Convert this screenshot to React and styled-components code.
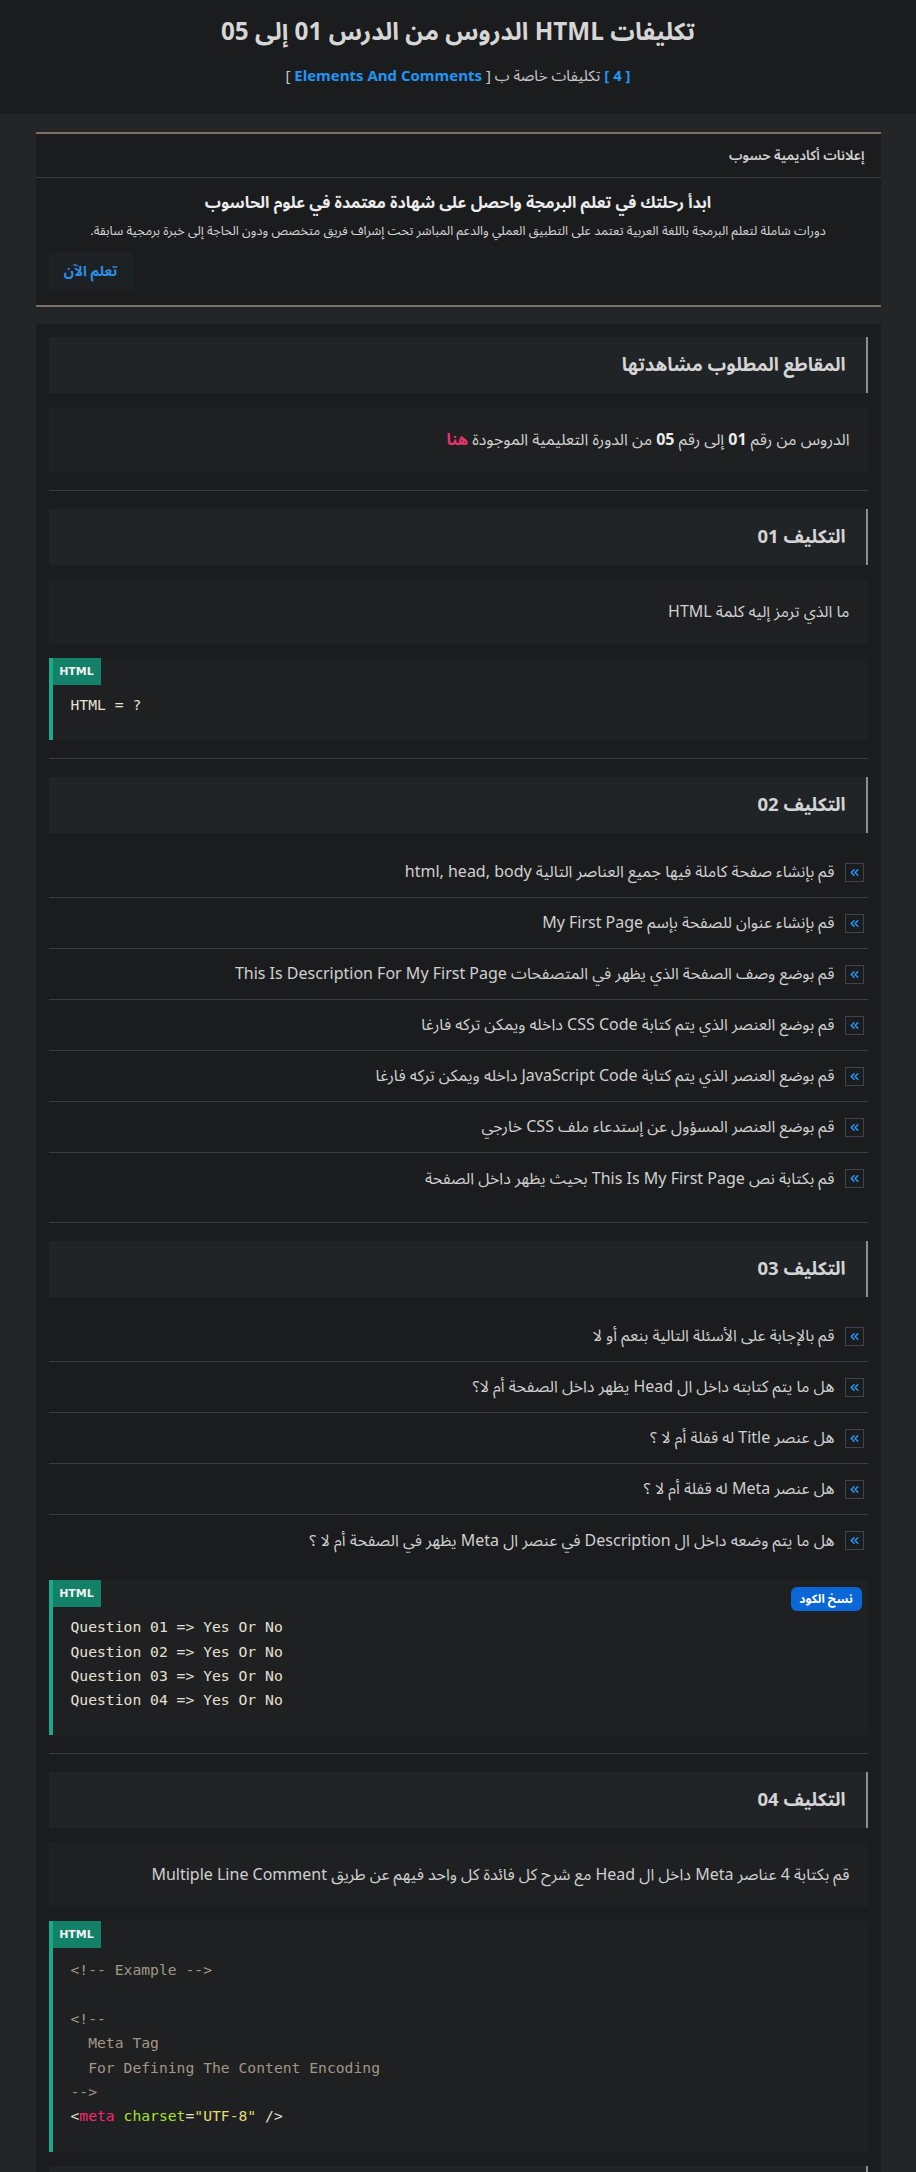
import React from 'react';
import styled, { createGlobalStyle } from 'styled-components';

const GlobalStyle = createGlobalStyle`
  body {
    margin: 0;
    background: #242527;
    direction: rtl;
    font-family: "Noto Sans Arabic", "Noto Kufi Arabic", "Noto Sans", "DejaVu Sans", sans-serif;
    color: #cfcfcf;
  }
`;

const Header = styled.header`
  background: #1b1c1e;
  height: 114px;
  box-sizing: border-box;
  padding-top: 12px;
  text-align: center;
`;

const Title = styled.h1`
  margin: 0;
  font-size: 24.3px;
  line-height: 42px;
  font-weight: 700;
  color: #d6d6d6;
`;

const Subtitle = styled.p`
  margin: 2px 0 0;
  font-size: 15px;
  line-height: 40px;
  color: #c8c8c8;
`;

const Blue = styled.span`
  color: #2196f3;
  font-weight: ${p => (p.bold ? 700 : 400)};
`;

const Container = styled.main`
  width: 845px;
  margin: 18px auto 0;
`;

const AdBox = styled.section`
  background: #1b1c1e;
  border-top: 2px solid #7a7066;
  border-bottom: 2px solid #7a7066;
`;

const AdHead = styled.div`
  height: 43px;
  display: flex;
  align-items: center;
  padding: 0 16px;
  border-bottom: 1px solid #3a3b3d;
  font-size: 13.5px;
  font-weight: 600;
  color: #d2d2d2;
`;

const AdBody = styled.div`
  padding: 12px 13px 14px;
  text-align: center;
`;

const AdTitle = styled.h3`
  margin: 0;
  font-size: 16px;
  line-height: 26px;
  font-weight: 700;
  color: #ececec;
`;

const AdText = styled.p`
  margin: 4px 0 10px;
  font-size: 12.7px;
  line-height: 22px;
  color: #d6d6d6;
`;

const AdButton = styled.a`
  display: block;
  width: 84px;
  height: 39px;
  line-height: 39px;
  background: #1e2124;
  border-radius: 4px;
  color: #2b8fe8;
  font-weight: 700;
  font-size: 14px;
  text-align: center;
  margin-right: auto;
  text-decoration: none;
`;

const Card = styled.section`
  background: #1b1c1e;
  margin-top: 17px;
  padding: 13px;
`;

const Section = styled.div`
  display: flex;
  flex-direction: column;
  gap: 14px;
`;

const Heading = styled.h2`
  margin: 0;
  height: 56px;
  box-sizing: border-box;
  display: flex;
  align-items: center;
  padding: 0 20px;
  background: #212426;
  border-right: 2px solid #8c8c8c;
  font-size: 18.5px;
  font-weight: 700;
  color: #d4d4d4;
`;

const Para = styled.p`
  margin: 0;
  height: 65px;
  display: flex;
  align-items: center;
  padding: 0 18px;
  background: #1e2022;
  font-size: 16px;
  color: #d0d0d0;
`;

const Strong = styled.b`
  color: ${p => p.color || '#ececec'};
  white-space: pre;
`;

const Divider = styled.hr`
  border: 0;
  height: 1px;
  background: #3a3b3d;
  margin: 18px 0;
`;

const List = styled.ul`
  list-style: none;
  margin: 0;
  padding: 0;
`;

const Item = styled.li`
  height: 51px;
  box-sizing: border-box;
  display: flex;
  align-items: center;
  gap: 10px;
  padding-right: 4px;
  font-size: 16px;
  color: #d0d0d0;
  border-bottom: 1px solid #3a3b3d;
  &:last-child {
    border-bottom: 0;
  }
`;

const IconBox = styled.span`
  width: 19px;
  height: 19px;
  box-sizing: border-box;
  border: 1px solid #3e444b;
  display: flex;
  align-items: center;
  justify-content: center;
  flex: none;
`;

const CodeBlock = styled.div`
  position: relative;
  direction: ltr;
  background: #1f2022;
  border-left: 4px solid #1aa98a;
`;

const Tag = styled.div`
  width: 48px;
  height: 27px;
  line-height: 27px;
  background: #138068;
  color: #f2f2f2;
  font-family: "DejaVu Sans", sans-serif;
  font-size: 11px;
  font-weight: 700;
  text-align: center;
`;

const Pre = styled.pre`
  margin: 0;
  padding: ${p => p.top || 8}px 18px 23px;
  font-family: "DejaVu Sans Mono", "Liberation Mono", monospace;
  font-size: 14.7px;
  line-height: 24.3px;
  color: #e6e0d2;
`;

const CopyButton = styled.button`
  position: absolute;
  top: 7px;
  right: 6px;
  height: 24px;
  width: 71px;
  border: 0;
  border-radius: 6px;
  background: #0b66d6;
  color: #fff;
  font-family: inherit;
  font-size: 12px;
  font-weight: 700;
  direction: rtl;
  padding: 0;
`;

const C = styled.span`
  color: ${p => p.c};
`;

const Chevrons = () => (
  <svg width="13" height="13" viewBox="0 0 24 24" fill="none" stroke="#2196f3" strokeWidth="3" strokeLinecap="round" strokeLinejoin="round">
    <path d="M11 17l-5-5 5-5" />
    <path d="M18 17l-5-5 5-5" />
  </svg>
);

const Tasks = ({ items }) => (
  <List>
    {items.map((t, i) => (
      <Item key={i}>
        <IconBox><Chevrons /></IconBox>
        <span>{t}</span>
      </Item>
    ))}
  </List>
);

const task2 = [
  'قم بإنشاء صفحة كاملة فيها جميع العناصر التالية html, head, body',
  'قم بإنشاء عنوان للصفحة بإسم My First Page',
  'قم بوضع وصف الصفحة الذي يظهر في المتصفحات This Is Description For My First Page',
  'قم بوضع العنصر الذي يتم كتابة CSS Code داخله ويمكن تركه فارغا',
  'قم بوضع العنصر الذي يتم كتابة JavaScript Code داخله ويمكن تركه فارغا',
  'قم بوضع العنصر المسؤول عن إستدعاء ملف CSS خارجي',
  'قم بكتابة نص This Is My First Page بحيث يظهر داخل الصفحة',
];

const task3 = [
  'قم بالإجابة على الأسئلة التالية بنعم أو لا',
  'هل ما يتم كتابته داخل ال Head يظهر داخل الصفحة أم لا؟',
  'هل عنصر Title له قفلة أم لا ؟',
  'هل عنصر Meta له قفلة أم لا ؟',
  'هل ما يتم وضعه داخل ال Description في عنصر ال Meta يظهر في الصفحة أم لا ؟',
];

const comment = '#a39784';

export default function App() {
  return (
    <>
      <GlobalStyle />
      <Header>
        <Title>تكليفات HTML الدروس من الدرس 01 إلى 05</Title>
        <Subtitle>
          <Blue bold>[ 4 ]</Blue> تكليفات خاصة ب [ <Blue bold>Elements And Comments</Blue> ]
        </Subtitle>
      </Header>

      <Container>
        <AdBox>
          <AdHead>إعلانات أكاديمية حسوب</AdHead>
          <AdBody>
            <AdTitle>ابدأ رحلتك في تعلم البرمجة واحصل على شهادة معتمدة في علوم الحاسوب</AdTitle>
            <AdText>دورات شاملة لتعلم البرمجة باللغة العربية تعتمد على التطبيق العملي والدعم المباشر تحت إشراف فريق متخصص ودون الحاجة إلى خبرة برمجية سابقة.</AdText>
            <AdButton href="#">تعلم الآن</AdButton>
          </AdBody>
        </AdBox>

        <Card>
          <Section>
            <Heading>المقاطع المطلوب مشاهدتها</Heading>
            <Para>
              <span>
                الدروس من رقم <Strong>01</Strong> إلى رقم <Strong>05</Strong> من الدورة التعليمية الموجودة <Strong color="#e8336d">هنا</Strong>
              </span>
            </Para>
          </Section>
          <Divider />

          <Section>
            <Heading>التكليف 01</Heading>
            <Para>ما الذي ترمز إليه كلمة HTML</Para>
            <CodeBlock>
              <Tag>HTML</Tag>
              <Pre>HTML = ?</Pre>
            </CodeBlock>
          </Section>
          <Divider />

          <Section>
            <Heading>التكليف 02</Heading>
            <Tasks items={task2} />
          </Section>
          <Divider />

          <Section>
            <Heading>التكليف 03</Heading>
            <Tasks items={task3} />
            <CodeBlock>
              <Tag>HTML</Tag>
              <CopyButton>نسخ الكود</CopyButton>
              <Pre>{`Question 01 => Yes Or No
Question 02 => Yes Or No
Question 03 => Yes Or No
Question 04 => Yes Or No`}</Pre>
            </CodeBlock>
          </Section>
          <Divider />

          <Section>
            <Heading>التكليف 04</Heading>
            <Para>قم بكتابة 4 عناصر Meta داخل ال Head مع شرح كل فائدة كل واحد فيهم عن طريق Multiple Line Comment</Para>
            <CodeBlock>
              <Tag>HTML</Tag>
              <Pre top={10}>
                <C c={comment}>{`<!-- Example -->

<!--
  Meta Tag
  For Defining The Content Encoding
-->`}</C>
                {'\n<'}<C c="#f92672">meta</C> <C c="#a6e22e">charset</C>=<C c="#e6db74">"UTF-8"</C>{' />'}
              </Pre>
            </CodeBlock>
            <Heading>الحل</Heading>
          </Section>
        </Card>
      </Container>
    </>
  );
}
